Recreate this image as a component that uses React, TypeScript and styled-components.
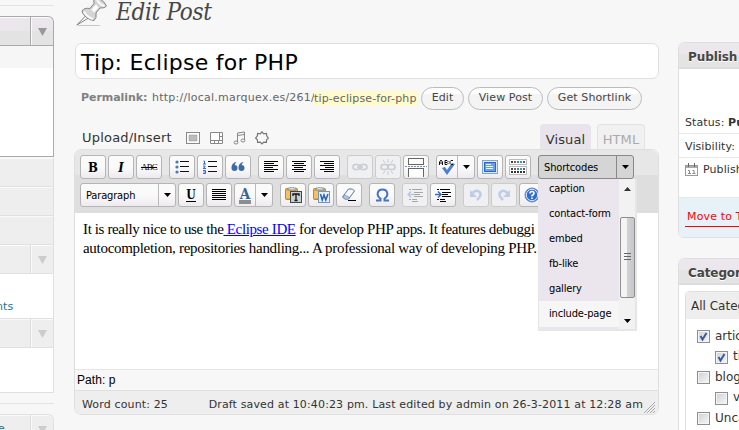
import React from 'react';
import styled, { createGlobalStyle, css } from 'styled-components';

const ui = '"DejaVu Sans", Verdana, sans-serif';
const compact = '"DejaVu Sans Condensed", "DejaVu Sans", Tahoma, sans-serif';

const GlobalStyle = createGlobalStyle`
  * { box-sizing: border-box; }
  html, body { margin: 0; background: #f7f7f7; overflow: hidden; }
  svg { display: block; flex: none; }
`;

const Page = styled.div`
  width: 739px;
  height: 430px;
  overflow: hidden;
  display: grid;
  grid-template-columns: 54px 585px 61px;
  column-gap: 20px;
  background: #f7f7f7;
  color: #333;
  font: 11px/14px ${ui};
  white-space: nowrap;
`;

/* ---------- admin menu ---------- */
const Menu = styled.nav`
  height: 430px;
  overflow: hidden;
  display: flex;
  flex-direction: column;
`;
const Rule = styled.div<{ $top: number; $bottom: number }>`
  flex: none;
  height: 1px;
  margin: ${p => p.$top}px 0 ${p => p.$bottom}px;
  background: #e3e3e3;
`;
const MenuRow = styled.div<{ $h: number; $active?: boolean; $rounded?: boolean }>`
  flex: none;
  height: ${p => p.$h}px;
  display: flex;
  justify-content: flex-end;
  background: #eee;
  border: solid #e0e0e0;
  border-width: 0 1px 1px 0;
  box-shadow: inset 0 1px #fafafa;
  color: #21759b;
  ${p => p.$rounded && css`border-top-width: 1px; border-top-right-radius: 6px;`}
  ${p => p.$active && css`
    border-color: #aaa;
    background: linear-gradient(#ebe6ec 50%, #e3e3e3 50%);
  `}
`;
const MenuLabel = styled.span`
  flex: 1;
  padding-top: 7px;
  margin-left: -2px;
`;
const Toggle = styled.div<{ $active?: boolean }>`
  width: 23px;
  border-left: 1px solid ${p => (p.$active ? '#aaa' : '#ddd')};
  box-shadow: inset 1px 0 #fafafa;
  display: flex;
  align-items: center;
  justify-content: center;
  color: ${p => (p.$active ? '#999' : '#ccc')};
`;
const SubMenu = styled.div<{ $h: number; $active?: boolean }>`
  flex: none;
  height: ${p => p.$h}px;
  background: ${p => (p.$active ? 'linear-gradient(#f6f6f6 22px, #fff 22px)' : '#fff')};
  border: solid ${p => (p.$active ? '#aaa' : '#e0e0e0')};
  border-width: 0 1px 1px 0;
  margin-bottom: ${p => (p.$active ? 1 : 0)}px;
  padding-top: 26px;
  color: #21759b;
  text-indent: -4px;
  letter-spacing: 0.1px;
`;
const Triangle = () => (
  <svg width="9" height="9" viewBox="0 0 9 9"><path d="M0 1h9L4.5 9z" fill="currentColor" /></svg>
);

/* ---------- main column ---------- */
const Main = styled.main`
  display: flex;
  flex-direction: column;
`;
const Heading = styled.header`
  height: 43px;
  display: flex;
  gap: 9px;
  padding-left: 2px;
`;
const HeadingText = styled.h1`
  margin: -3px 0 0;
  font: italic 24px/30px "DejaVu Serif Condensed", "DejaVu Serif", Georgia, serif;
  letter-spacing: -0.3px;
  color: #464646;
`;
const TitleField = styled.div`
  height: 36px;
  margin-left: 1px;
  padding: 0 5px;
  border: 1px solid #dfdfdf;
  border-radius: 7px;
  background: #fff;
  color: #000;
  font: 22px/37px ${ui};
  letter-spacing: 0.26px;
`;
const Permalink = styled.div`
  height: 38px;
  display: flex;
  align-items: center;
  padding-left: 7px;
  color: #666;
`;
const PermalinkLabel = styled.strong`
  width: 71px;
  color: #808080;
  letter-spacing: -0.05px;
`;
const PermalinkUrl = styled.span`
  width: 162px;
  letter-spacing: 0.25px;
`;
const Slug = styled.span`
  width: 103px;
  margin-right: 4px;
  background: #fffbcc;
  line-height: 15px;
  letter-spacing: 0.13px;
`;
const Pill = styled.button<{ $w: number }>`
  width: ${p => p.$w}px;
  height: 23px;
  margin-right: 4px;
  padding: 0;
  border: 1px solid #bbb;
  border-radius: 12px;
  background: linear-gradient(#fff 30%, #f4f4f4 30%);
  color: #464646;
  font: 11px/20px ${ui};
  letter-spacing: 0.1px;
`;
const MediaBar = styled.div`
  height: 32px;
  display: flex;
  align-items: flex-end;
  padding-left: 8px;
`;
const MediaLabel = styled.span`
  width: 104px;
  font-size: 13px;
  line-height: 22px;
  letter-spacing: 0.2px;
`;
const MediaIcons = styled.div`
  flex: 1;
  height: 22px;
  display: flex;
  gap: 9px;
  align-items: center;
  color: #888;
`;
const Tab = styled.div<{ $w: number; $on?: boolean }>`
  width: ${p => p.$w}px;
  height: 25px;
  margin-right: ${p => (p.$on ? 6 : 14)}px;
  border: 1px solid ${p => (p.$on ? '#e9e4eb' : '#e3e3e3')};
  border-bottom: 0;
  border-radius: 4px 4px 0 0;
  background: ${p => (p.$on ? '#e9e4eb' : '#f1f1f1')};
  color: ${p => (p.$on ? '#333' : '#aaa')};
  font-size: 13px;
  line-height: 29px;
  text-align: center;
  letter-spacing: 0.1px;
`;
const Editor = styled.section`
  height: 266px;
  display: flex;
  flex-direction: column;
  border: 1px solid #dfdfdf;
  border-radius: 7px;
  background: #fff;
`;
const Toolbar = styled.div`
  position: relative;
  height: 63px;
  padding: 5px;
  border-radius: 6px 6px 0 0;
  background: linear-gradient(#e7e7e7 25px, #dedede 25px);
  display: flex;
  flex-direction: column;
  gap: 4px;
`;
const ToolRow = styled.div`
  display: flex;
  gap: 7px;
`;
const Group = styled.div`
  display: flex;
  gap: 2px;
`;
const Tool = styled.button<{ $w?: number; $off?: boolean; $pressed?: boolean }>`
  width: ${p => p.$w || 26}px;
  height: 24px;
  padding: 0;
  display: flex;
  align-items: center;
  justify-content: center;
  border: 1px solid ${p => (p.$pressed ? '#888' : p.$off ? '#ccc' : '#b5b5b5')};
  border-radius: 3px;
  background: ${p => (p.$pressed ? '#d5d5d5' : p.$off ? '#f0eff1' : 'linear-gradient(#fafafa 50%, #eeeaf0)')};
  color: #000;
  font: 11px/20px ${compact};
  & > svg { opacity: ${p => (p.$off ? 0.3 : 1)}; }
`;
const ToolFace = styled.span<{ $text?: boolean }>`
  flex: 1;
  height: 22px;
  display: flex;
  align-items: center;
  justify-content: ${p => (p.$text ? 'flex-start' : 'center')};
  padding: ${p => (p.$text ? '2px 0 0 5px' : '0')};
  letter-spacing: -0.15px;
`;
const Arrow = styled.span<{ $pressed?: boolean }>`
  width: 17px;
  height: 22px;
  display: flex;
  align-items: center;
  justify-content: center;
  border-left: 1px solid ${p => (p.$pressed ? '#888' : '#bbb')};
`;
const Letter = styled.span<{ $kind: 'b' | 'i' | 'u' | 's' | 'a' }>`
  font: bold 14px/15px "DejaVu Serif Condensed", "DejaVu Serif", serif;
  ${p => p.$kind === 'b' && css`font-size: 13px;`}
  ${p => p.$kind === 'i' && css`font-style: italic; font-size: 13px;`}
  ${p => p.$kind === 'u' && css`font-size: 12px; line-height: 13px; border-bottom: 1px solid #000; height: 13px;`}
  ${p => p.$kind === 's' && css`font: 9px/12px "Liberation Serif", serif; letter-spacing: -0.8px; text-decoration: line-through;`}
  ${p => p.$kind === 'a' && css`color: #35639d; height: 17px; font-size: 15px; line-height: 14px; border-bottom: 4px solid #8b8f91; padding: 0 1px;`}
`;
const Writing = styled.div`
  flex: 1;
  padding: 7px 8px;
  color: #000;
  font: 15px/19px "Liberation Serif", Georgia, serif;
`;
const Line = styled.div<{ $tracking: number }>`
  height: 19px;
  letter-spacing: ${p => p.$tracking}px;
`;
const PostLink = styled.span`
  color: #00f;
  text-decoration: underline;
`;
const PathBar = styled.div`
  height: 21px;
  padding-left: 2px;
  border-top: 1px solid #e5e5e5;
  background: #f7f7f7;
  color: #000;
  font: 12px/21px "Liberation Sans", Arial, sans-serif;
  letter-spacing: 0.05px;
`;
const StatusBar = styled.div`
  height: 24px;
  display: flex;
  justify-content: space-between;
  padding: 0 2px 0 7px;
  border-top: 1px solid #dfdfdf;
  border-radius: 0 0 6px 6px;
  background: #eee;
  line-height: 27px;
  letter-spacing: 0.14px;
`;
const SaveState = styled.span`
  display: flex;
  gap: 1px;
  & > svg { align-self: flex-end; }
`;
const DropMenu = styled.div`
  position: absolute;
  z-index: 2;
  left: 463px;
  top: 29px;
  width: 99px;
  height: 152px;
  overflow: hidden;
  display: flex;
  border: solid #e6e6e6;
  border-width: 0 2px 2px 1px;
  background: #ebe6ee;
`;
const Options = styled.div`
  flex: 1;
  margin-top: -3px;
`;
const Option = styled.div<{ $hover?: boolean }>`
  height: 25.1px;
  padding-left: 10px;
  background: ${p => (p.$hover ? '#f6f6f6' : '#ebe6ee')};
  color: #000;
  font: 11px/25px ${compact};
  letter-spacing: -0.15px;
`;
const ScrollTrack = styled.div`
  width: 16px;
  display: flex;
  flex-direction: column;
  align-items: center;
  justify-content: space-between;
  padding: 8px 0 6px;
  background: #f2f2f2;
`;
const Thumb = styled.div`
  width: 15px;
  height: 81px;
  margin: 4px 0 0;
  display: flex;
  align-items: center;
  justify-content: center;
  border: 1px solid #8e8e8e;
  border-radius: 2px;
  background: linear-gradient(90deg, #f4f4f4 45%, #d2d2d4 50%, #c8c8ca);
`;

/* ---------- side boxes ---------- */
const Side = styled.aside`
  width: 90px;
  height: 430px;
  overflow: hidden;
  margin-left: -1px;
  padding-top: 42px;
  display: flex;
  flex-direction: column;
  gap: 20px;
`;
const Box = styled.section<{ $h: number }>`
  flex: none;
  height: ${p => p.$h}px;
  border: 1px solid #dfdfdf;
  border-radius: 6px;
  background: #fff;
  overflow: hidden;
  display: flex;
  flex-direction: column;
`;
const BoxTitle = styled.h2`
  flex: none;
  height: 26px;
  margin: 0;
  padding-left: 9px;
  border-bottom: 2px solid #dcdcdc;
  background: linear-gradient(#ece7ed 11px, #e4e4e4 11px);
  color: #464646;
  font: bold 12px/28px ${ui};
  letter-spacing: -0.1px;
  text-shadow: 0 1px #fff;
`;
const Setting = styled.div<{ $h: number; $last?: boolean }>`
  flex: none;
  height: ${p => p.$h}px;
  display: flex;
  align-items: ${p => (p.$last ? 'flex-start' : 'flex-end')};
  gap: 4px;
  padding: 5px 6px 3px;
  border-bottom: 1px solid #e8e8e8;
  letter-spacing: 0.1px;
`;
const BoxFooter = styled.div`
  flex: 1;
  padding: 11px 6px;
  background: #e6f2f8;
`;
const Trash = styled.span`
  display: inline-block;
  padding: 1px 0 0 2px;
  height: 18px;
  border-bottom: 1px solid #f00;
  color: #f00;
  letter-spacing: 0.15px;
`;
const CategoryPanel = styled.div`
  margin: 6px 0 0 6px;
  height: 200px;
  border: 1px solid #dfdfdf;
  border-radius: 4px 0 0 0;
  overflow: hidden;
`;
const CategoryTab = styled.div`
  height: 27px;
  margin-bottom: 5px;
  padding-left: 5px;
  background: #eee;
  font-size: 12px;
  line-height: 28px;
`;
const Category = styled.div<{ $child?: boolean }>`
  height: 20.5px;
  display: flex;
  align-items: center;
  gap: 5px;
  padding: 3px 0 0 ${p => (p.$child ? 29 : 11)}px;
  font-size: 12px;
`;
const CheckBox = styled.span`
  flex: none;
  width: 13px;
  height: 13px;
  margin-top: 2px;
  border: 1px solid #8e8f8f;
  box-shadow: inset 0 0 0 1px #f4f4f4;
  background: linear-gradient(135deg, #cdd1d6, #f6f6f6);
`;

/* ---------- drawings ---------- */
const Align = ({ kind }: { kind: 'l' | 'c' | 'r' | 'j' }) => {
  const lens = [14, 10, 14, 9, 14, 10];
  return (
    <svg width="16" height="14" viewBox="0 0 16 14" shapeRendering="crispEdges">
      {lens.map((n, i) => {
        const len = kind === 'j' ? 14 : n;
        const x = kind === 'c' ? 1 + Math.floor((14 - len) / 2) : kind === 'r' ? 15 - len : 1;
        return <rect key={i} x={x} y={1 + i * 2} width={len} height="1" fill="#000" />;
      })}
    </svg>
  );
};
const Down = () => <svg width="7" height="4" viewBox="0 0 7 4"><path d="M0 0h7L3.5 4z" fill="#000" /></svg>;
const Bullets = () => (
  <svg width="16" height="14" viewBox="0 0 16 14">
    {[2, 7, 12].map(y => <g key={y}><circle cx="3" cy={y} r="1.6" fill="#4779b8" /><rect x="6" y={y - 1} width="9" height="1" fill="#111" /></g>)}
  </svg>
);
const Numbers = () => (
  <svg width="16" height="14" viewBox="0 0 16 14">
    <path d="M1.500 1h1v3M1 4h3M1 6h2v1L1 8.500h3M1 10.500h2.500v3H1M1.500 12h2" fill="none" stroke="#3a6bc7" />
    {[1, 6, 11].map(y => <rect key={y} x="6" y={y} width="9" height="1" fill="#111" />)}
  </svg>
);
const Quote = () => (
  <svg width="14" height="12" viewBox="0 0 14 12" fill="#3d6ba6">
    <path d="M5.500 1C2.500 1.300.5 3.600.5 7a3 3 0 1 0 3-3C4 3 4.600 2 5.500 1zM12.500 1C9.500 1.300 7.500 3.600 7.500 7a3 3 0 1 0 3-3C11 3 11.600 2 12.500 1z" />
  </svg>
);
const Chain = ({ broken }: { broken?: boolean }) => (
  <svg width="18" height="18" viewBox="0 0 18 18" fill="none" stroke="#708090" strokeWidth="1.6">
    <rect x="2" y="6.500" width="7" height="5" rx="2.500" /><rect x="9" y="6.500" width="7" height="5" rx="2.500" />
    {!broken && <path d="M6 9h6" />}
    {broken && <path d="M9 1v4M4 2l2 3M14 2l-2 3M9 13v4M4 16l2-3M14 16l-2-3M8 11l3-5" strokeWidth="1" />}
  </svg>
);
const More = () => (
  <svg width="22" height="20" viewBox="0 0 22 20" shapeRendering="crispEdges" fill="#fff" stroke="#666">
    <path d="M3.500 1.500h15v6h-15zM3.500 20v-8.500h15V20" /><path d="M0 9.500h22" stroke="#7890a8" strokeDasharray="2 1" />
  </svg>
);
const SpellMark = () => (
  <svg width="18" height="19" viewBox="0 0 18 19">
    <path d="M4 10l3-1 2 3 5-7 3 1-8 11z" fill="#4a80cf" />
    <path d="M1.500 7V4l1.500-2 1.500 2v3M1.500 5h3M7 2.500v4h2l1-1-1-1H7M7 2.500h2l1 1-1 1M15 2.500h-2l-1 1v2l1 1h2" fill="none" stroke="#111" />
  </svg>
);
const Fullscreen = () => (
  <svg width="16" height="14" viewBox="0 0 16 14"><rect x=".5" y=".5" width="15" height="13" fill="#dfeafa" stroke="#7fa3da" /><rect x="2.500" y="2.500" width="11" height="9" fill="#6c9ee8" stroke="#2e66c4" /><path d="M4 4.500h5M4 6.500h7M4 8.500h7" stroke="#e9f2ff" /></svg>
);
const Kitchen = () => (
  <svg width="18" height="16" viewBox="0 0 18 16" shapeRendering="crispEdges">
    <path d="M.5.500h17v5H.5zM.5 7.500h17v8H.5z" fill="#fff" stroke="#bbb" />
    {[2, 9, 12].map((y, r) => [2, 5, 8, 11, 14].map((x, i) => <rect key={`${r}${x}`} x={x} y={y} width="2" height="2" fill={r === 2 ? '#333' : ['#444', '#8b5b42', '#4a7bc0', '#3ba392', '#4564a0'][i]} />))}
  </svg>
);
const Paste = ({ word }: { word?: boolean }) => (
  <svg width="17" height="16" viewBox="0 0 17 16">
    <rect x=".5" y="1.500" width="12" height="11" rx="1" fill="#eca93b" stroke="#b88931" /><path d="M3 3V1h2l1-1h2l1 1h2v2z" fill="#d8dde1" stroke="#747e88" strokeWidth=".7" />
    <path d="M2 4v7M4 4v7" stroke="#ffd98e" />
    <rect x="5.500" y="4.500" width="11" height="11" fill={word ? '#e8f0fd' : '#c8cfd0'} stroke={word ? '#6b94d2' : '#3e4648'} />
    {word ? <path d="M7.500 7l1.700 6L11 8l1.800 5L15 7" fill="none" stroke="#2861b8" strokeWidth="1.500" /> : <path d="M8 9V7h6v2M11 7v6M9.500 13.500h3" fill="none" stroke="#111" strokeWidth="1.300" />}
  </svg>
);
const Eraser = () => (
  <svg width="16" height="14" viewBox="0 0 16 14"><path d="M1.500 9l6-8h4l2 2-6 8H3.500z" fill="#f4f8fc" stroke="#60758f" /><path d="M2 9l2-2 4 2v2H4z" fill="#a9c7e9" stroke="#7590b0" strokeWidth=".6" /><path d="M7 12.500h8" stroke="#000" /></svg>
);
const Omega = () => (
  <svg width="15" height="14" viewBox="0 0 15 14"><path d="M1 12.500h4.500v-2C1 8 2 1.500 7.500 1.500S14 8 9.500 10.500v2H14" fill="none" stroke="#4473c9" strokeWidth="2" /></svg>
);
const Indent = ({ out }: { out?: boolean }) => (
  <svg width="17" height="14" viewBox="0 0 17 14">
    <g fill="#000" shapeRendering="crispEdges">
      <path d="M2 1h2v1h-2zM5 1h10v1h-10zM7 4h9v1h-9zM7 6h6v1h-6zM7 8h9v1h-9zM5 11h5v1h-5zM2 11h2v1h-2zM5 13h6v1h-6z" />
    </g>
    <path d={out ? 'M7 6.500H2M4 3.500l-3 3 3 3' : 'M0 6.500h5M3 3.500l3 3-3 3'} stroke="#376fc5" fill="none" strokeWidth="1.500" />
  </svg>
);
const Undo = ({ redo }: { redo?: boolean }) => (
  <svg width="14" height="14" viewBox="0 0 14 14"><g transform={redo ? 'translate(14 0) scale(-1 1)' : undefined}><path d="M3.500 5q4-4 7-1t-2.500 8" fill="none" stroke="#4a80cf" strokeWidth="2.500" /><path d="M1 2v7h7z" fill="#4a80cf" /></g></svg>
);
const Help = () => (
  <svg width="16" height="16" viewBox="0 0 16 16"><circle cx="8" cy="8" r="7" fill="#2f6bd0" stroke="#6d92c6" /><circle cx="8" cy="8" r="5.700" fill="none" stroke="#dbe8fb" /><path d="M6 6.500q0-2 2-2t2 1.700Q10 7.500 8 8.500v1M8 10.500v1.500" stroke="#fff" strokeWidth="1.600" fill="none" /></svg>
);
const Pin = () => (
  <svg width="31" height="27" viewBox="0 0 31 27">
    <path d="M2 25.500h22" stroke="#c8c8c8" />
    <path d="M.8 25L10 15.500l2.500 2.500z" fill="#fafafa" stroke="#777" strokeWidth=".9" />
    <path d="M6 11Q8 7.500 14 8.500L18 3.500Q17 0 19 -2h4q6 4 7.500 8-1.500 2.500-6.500 2L20 13q1 5-2 7.500-4 0-8-3.500T6 11z" fill="#d4d4d4" stroke="#858585" />
    <path d="M8 11.500q3 6 9 7.500" fill="none" stroke="#f8f8f8" strokeWidth="2.200" />
    <path d="M15.500 9.500l4.500-5 2.500 3-4.500 5z" fill="#fff" />
    <path d="M21 0q2.500 4.500 7.500 6" fill="none" stroke="#f8f8f8" strokeWidth="2" />
  </svg>
);
const MediaImage = () => <svg width="15" height="13" viewBox="0 0 15 13"><rect x=".5" y=".5" width="13" height="11" fill="#fff" stroke="currentColor" /><rect x="3" y="3" width="8" height="6" fill="#bbb" stroke="#999" strokeWidth=".5" /></svg>;
const MediaVideo = () => <svg width="14" height="13" viewBox="0 0 14 13"><path d="M.5.500h12v11H.5zM.5 8.500h12M9.500.500v8M9.500 4.500h3M4.500 8.500v3M8.500 8.500v3" fill="#fff" stroke="currentColor" /></svg>;
const MediaAudio = () => <svg width="13" height="14" viewBox="0 0 13 14"><path d="M4.500 11V2l7-1v8M4.500 4.500l7-1" fill="none" stroke="currentColor" /><ellipse cx="3" cy="11.500" rx="2" ry="1.500" fill="none" stroke="currentColor" /><ellipse cx="10" cy="9.500" rx="2" ry="1.500" fill="none" stroke="currentColor" /></svg>;
const MediaOther = () => <svg width="14" height="14" viewBox="0 0 14 14"><path d="M7 .8l1.700 2.100 2.700-.5.400 2.700 1.600 2-1.800 1.700-.200 2.600-2.700-.2L7 13l-1.800-1.800-2.600.2-.3-2.600L.6 7l1.700-1.900.3-2.700 2.700.5z" fill="#f8f8f8" stroke="#777" strokeWidth="1.200" /></svg>;
const Calendar = () => (
  <svg width="14" height="14" viewBox="0 0 14 14"><rect x=".5" y="2.500" width="12" height="10" fill="#fff" stroke="#999" /><path d="M1 3h11v2H1z" fill="#aaa" /><path d="M3.500 0v4M9.500 0v4" stroke="#666" /><path d="M3 7.500h1.500v3M3 10.500h3M7.500 7.500H9v3M7.500 10.500h3" fill="none" stroke="#888" /></svg>
);
const Check = ({ on }: { on?: boolean }) => (
  <CheckBox>{on && <svg width="11" height="11" viewBox="0 0 11 11"><path d="M2.500 5l2 3.500L8.500 2" fill="none" stroke="#3a59a0" strokeWidth="2" /></svg>}</CheckBox>
);

const options = ['caption', 'contact-form', 'embed', 'fb-like', 'gallery', 'include-page'];
const categories = [
  { name: 'articulos', on: true },
  { name: 'tips', on: true, child: true },
  { name: 'blog' },
  { name: 'varios', child: true },
  { name: 'Uncategorized' },
];

export default function App() {
  return (
    <>
      <GlobalStyle />
      <Page>
        <Menu>
          <Rule $top={5} $bottom={10} />
          <MenuRow $h={30} $active $rounded><Toggle $active><Triangle /></Toggle></MenuRow>
          <SubMenu $h={111} $active />
          <MenuRow $h={29} />
          <MenuRow $h={29} />
          <MenuRow $h={29} />
          <MenuRow $h={29}><Toggle><Triangle /></Toggle></MenuRow>
          <SubMenu $h={45}>nts</SubMenu>
          <MenuRow $h={29}><Toggle><Triangle /></Toggle></MenuRow>
          <SubMenu $h={45} />
          <Rule $top={10} $bottom={10} />
          <MenuRow $h={30} $rounded><MenuLabel>e</MenuLabel><Toggle><Triangle /></Toggle></MenuRow>
        </Menu>

        <Main>
          <Heading><Pin /><HeadingText>Edit Post</HeadingText></Heading>
          <TitleField>Tip: Eclipse for PHP</TitleField>
          <Permalink>
            <PermalinkLabel>Permalink:</PermalinkLabel>
            <PermalinkUrl>http://local.marquex.es/261/</PermalinkUrl>
            <Slug>tip-eclipse-for-php</Slug>
            <Pill $w={43}>Edit</Pill>
            <Pill $w={75}>View Post</Pill>
            <Pill $w={95}>Get Shortlink</Pill>
          </Permalink>
          <MediaBar>
            <MediaLabel>Upload/Insert</MediaLabel>
            <MediaIcons><MediaImage /><MediaVideo /><MediaAudio /><MediaOther /></MediaIcons>
            <Tab $w={51} $on>Visual</Tab>
            <Tab $w={48}>HTML</Tab>
          </MediaBar>

          <Editor>
            <Toolbar>
              <ToolRow>
                <Group>
                  <Tool><Letter $kind="b">B</Letter></Tool>
                  <Tool><Letter $kind="i">I</Letter></Tool>
                  <Tool><Letter $kind="s">ABC</Letter></Tool>
                </Group>
                <Group><Tool><Bullets /></Tool><Tool><Numbers /></Tool><Tool><Quote /></Tool></Group>
                <Group><Tool><Align kind="l" /></Tool><Tool><Align kind="c" /></Tool><Tool><Align kind="r" /></Tool></Group>
                <Group><Tool $off><Chain /></Tool><Tool $off><Chain broken /></Tool><Tool><More /></Tool></Group>
                <Group>
                  <Tool $w={39}><ToolFace><SpellMark /></ToolFace><Arrow><Down /></Arrow></Tool>
                  <Tool><Fullscreen /></Tool>
                  <Tool><Kitchen /></Tool>
                </Group>
                <Tool $w={96} $pressed><ToolFace $text>Shortcodes</ToolFace><Arrow $pressed><Down /></Arrow></Tool>
              </ToolRow>
              <ToolRow>
                <Group>
                  <Tool $w={96}><ToolFace $text>Paragraph</ToolFace><Arrow><Down /></Arrow></Tool>
                  <Tool><Letter $kind="u">U</Letter></Tool>
                  <Tool><Align kind="j" /></Tool>
                  <Tool $w={39}><ToolFace><Letter $kind="a">A</Letter></ToolFace><Arrow><Down /></Arrow></Tool>
                </Group>
                <Group><Tool><Paste /></Tool><Tool><Paste word /></Tool><Tool><Eraser /></Tool></Group>
                <Tool><Omega /></Tool>
                <Group><Tool $off><Indent out /></Tool><Tool><Indent /></Tool></Group>
                <Group><Tool $off><Undo /></Tool><Tool $off><Undo redo /></Tool><Tool><Help /></Tool></Group>
              </ToolRow>
              <DropMenu>
                <Options>
                  {options.map((name, i) => <Option key={name} $hover={i === 5}>{name}</Option>)}
                </Options>
                <ScrollTrack>
                  <svg width="7" height="4" viewBox="0 0 7 4"><path d="M0 4h7L3.500 0z" fill="#333" /></svg>
                  <Thumb><svg width="7" height="8" viewBox="0 0 7 8" shapeRendering="crispEdges"><path d="M0 .5h7M0 3.500h7M0 6.500h7" stroke="#666" /></svg></Thumb>
                  <Down />
                </ScrollTrack>
              </DropMenu>
            </Toolbar>
            <Writing>
              <Line $tracking={-0.37}>It is really nice to use the<PostLink> Eclipse IDE</PostLink> for develop PHP apps. It features debuggi</Line>
              <Line $tracking={-0.3}>autocompletion, repositories handling... A professional way of developing PHP.</Line>
            </Writing>
            <PathBar>Path: p</PathBar>
            <StatusBar>
              <span>Word count: 25</span>
              <SaveState>
                Draft saved at 10:40:23 pm. Last edited by admin on 26-3-2011 at 12:28 am
                <svg width="12" height="12" viewBox="0 0 12 12"><path d="M0 11L11 0M3 11l8-8M6 11l5-5M9 11l2-2" stroke="#aaa" /></svg>
              </SaveState>
            </StatusBar>
          </Editor>
        </Main>

        <Side>
          <Box $h={196}>
            <BoxTitle>Publish</BoxTitle>
            <Setting $h={65}><span>Status: <b>Published</b></span></Setting>
            <Setting $h={24}>Visibility: <b>Public</b></Setting>
            <Setting $h={40} $last><Calendar />Published on</Setting>
            <BoxFooter><Trash>Move to Trash</Trash></BoxFooter>
          </Box>
          <Box $h={240}>
            <BoxTitle>Categories</BoxTitle>
            <CategoryPanel>
              <CategoryTab>All Categories</CategoryTab>
              {categories.map(c => <Category key={c.name} $child={c.child}><Check on={c.on} />{c.name}</Category>)}
            </CategoryPanel>
          </Box>
        </Side>
      </Page>
    </>
  );
}
